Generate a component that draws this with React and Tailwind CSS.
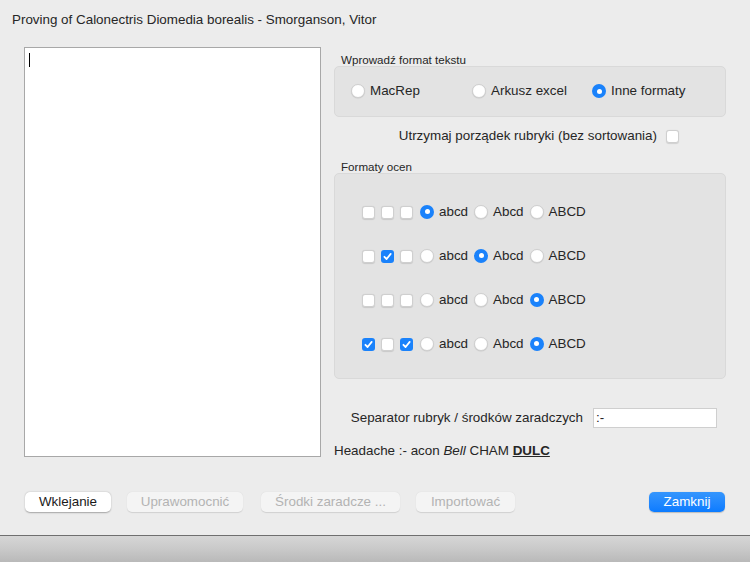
const Checkbox = ({ checked }) => (
  <div
    className={
      checked
        ? "w-[13px] h-[13px] rounded-[3px] bg-[#1a82fb] flex items-center justify-center shrink-0"
        : "w-[13px] h-[13px] rounded-[3px] bg-white border border-[#cfcfcf] shadow-[0_0.5px_1px_rgba(0,0,0,0.12)] shrink-0"
    }
  >
    {checked && (
      <svg width="11" height="11" viewBox="0 0 11 11">
        <path d="M2.4 5.8 L4.6 8 L8.7 2.9" fill="none" stroke="white" strokeWidth="1.8" strokeLinecap="round" strokeLinejoin="round" />
      </svg>
    )}
  </div>
);

const Radio = ({ checked }) => (
  <div
    className={
      checked
        ? "w-[14px] h-[14px] rounded-full bg-[#1a82fb] flex items-center justify-center shrink-0"
        : "w-[14px] h-[14px] rounded-full bg-white border border-[#cfcfcf] shadow-[0_0.5px_1px_rgba(0,0,0,0.12)] shrink-0"
    }
  >
    {checked && <div className="w-[5px] h-[5px] rounded-full bg-white" />}
  </div>
);

const rows = [
  { boxes: [false, false, false], sel: 0 },
  { boxes: [false, true, false], sel: 1 },
  { boxes: [false, false, false], sel: 2 },
  { boxes: [true, false, true], sel: 2 },
];

const labels = ["abcd", "Abcd", "ABCD"];

const App = () => {
  return (
    <div className="w-[750px] h-[562px] bg-[#ececec] flex flex-col font-['Liberation_Sans',Arial,sans-serif] text-[13.4px] text-[#262626] overflow-hidden">
      <div className="pl-[12px] pt-[12px] h-[28px] leading-[16px] shrink-0">
        Proving of Calonectris Diomedia borealis - Smorganson, Vitor
      </div>

      <div className="flex mt-[19px] h-[410px] shrink-0">
        <div className="ml-[24px] w-[297px] h-[410px] bg-white border border-[#a8a8a8] pl-[4px] pt-[5px]">
          <div className="w-px h-[14px] bg-black" />
        </div>

        <div className="ml-[13px] w-[392px] flex flex-col">
          <div className="mt-[6px] h-[13px] leading-[13px] text-[11.6px] pl-[7px] shrink-0">Wprowadź format tekstu</div>
          <div className="h-[51px] shrink-0 rounded-[5px] bg-[#e3e3e3] border border-[#d9d9d9] flex items-center pl-[16px]">
            <div className="w-[121px] flex items-center gap-[5px]">
              <Radio checked={false} />
              <span>MacRep</span>
            </div>
            <div className="w-[120px] flex items-center gap-[5px]">
              <Radio checked={false} />
              <span>Arkusz excel</span>
            </div>
            <div className="flex items-center gap-[5px]">
              <Radio checked={true} />
              <span>Inne formaty</span>
            </div>
          </div>

          <div className="mt-[11px] h-[16px] shrink-0 leading-[16px] flex items-center justify-end pr-[47px] gap-[9px]">
            <span>Utrzymaj porządek rubryki (bez sortowania)</span>
            <Checkbox checked={false} />
          </div>

          <div className="mt-[16px] h-[13px] shrink-0 leading-[13px] text-[11.6px] pl-[7px]">Formaty ocen</div>
          <div className="h-[206px] shrink-0 rounded-[5px] bg-[#e3e3e3] border border-[#d9d9d9] pt-[16px] pl-[27px]">
            {rows.map((row, i) => (
              <div key={i} className="h-[44px] flex items-center">
                <div className="flex items-center gap-[6px]">
                  {row.boxes.map((b, j) => (
                    <Checkbox key={j} checked={b} />
                  ))}
                </div>
                <div className="flex items-center ml-[7px]">
                  {labels.map((l, j) => (
                    <div key={j} className="flex items-center gap-[5px] mr-[6px]">
                      <Radio checked={row.sel === j} />
                      <span>{l}</span>
                    </div>
                  ))}
                </div>
              </div>
            ))}
          </div>

          <div className="mt-[29px] h-[20px] shrink-0 flex items-center justify-end pr-[9px] gap-[10px]">
            <span>Separator rubryk / środków zaradczych</span>
            <div className="w-[124px] h-[20px] bg-white border border-[#cfcfcf] pl-[2px] leading-[18px]">:-</div>
          </div>

          <div className="mt-[15px] h-[16px] shrink-0 leading-[16px] whitespace-nowrap">
            Headache :- acon <i>Bell</i> CHAM <b><u>DULC</u></b>
          </div>
        </div>
      </div>

      <div className="mt-[35px] h-[20px] shrink-0 flex items-center">
        <button className="ml-[25px] w-[86px] h-[20px] rounded-[5px] bg-white text-[#1a1a1a] shadow-[0_0.5px_1.5px_rgba(0,0,0,0.3)] leading-[20px]">
          Wklejanie
        </button>
        <button className="ml-[16px] w-[116px] h-[20px] rounded-[5px] bg-[#f4f4f4] text-[#b3b3b3] shadow-[0_0.5px_1px_rgba(0,0,0,0.12)] leading-[20px]">
          Uprawomocnić
        </button>
        <button className="ml-[18px] w-[139px] h-[20px] rounded-[5px] bg-[#f4f4f4] text-[#b3b3b3] shadow-[0_0.5px_1px_rgba(0,0,0,0.12)] leading-[20px]">
          Środki zaradcze ...
        </button>
        <button className="ml-[16px] w-[99px] h-[20px] rounded-[5px] bg-[#f4f4f4] text-[#b3b3b3] shadow-[0_0.5px_1px_rgba(0,0,0,0.12)] leading-[20px]">
          Importować
        </button>
        <button className="ml-auto mr-[25px] w-[76px] h-[20px] rounded-[5px] bg-gradient-to-b from-[#3596fd] to-[#0a7bff] text-white shadow-[0_0.5px_1px_rgba(0,0,0,0.2)] leading-[20px]">
          Zamknij
        </button>
      </div>

      <div className="mt-[23px] h-px shrink-0 bg-[#6f6f6f]" />
      <div className="flex-1 bg-gradient-to-b from-[#d6d6d6] via-[#c9c9c9] to-[#b9b9b9]" />
    </div>
  );
};

export default App;
